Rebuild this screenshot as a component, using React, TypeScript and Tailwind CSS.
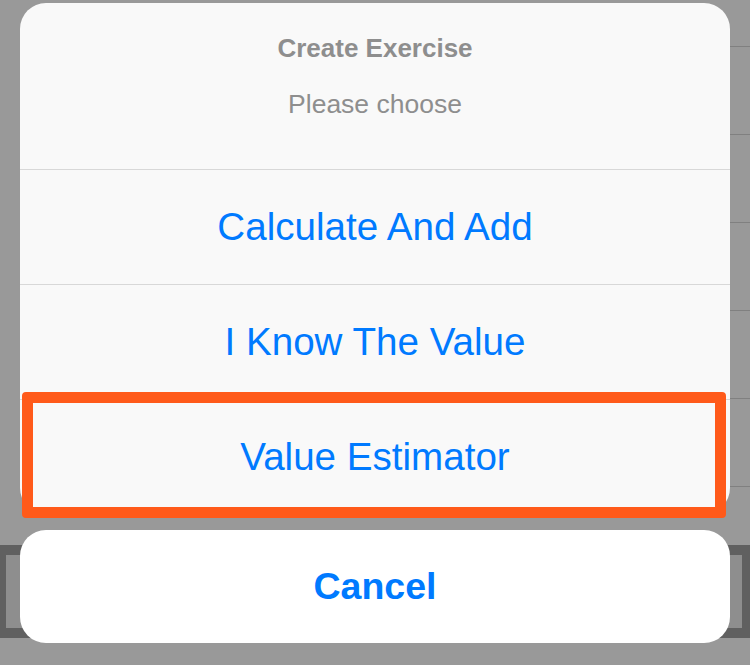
import React from "react";

const rows = ["Calculate And Add", "I Know The Value", "Value Estimator"];

export default function App() {
  return (
    <div
      className="relative w-[750px] h-[665px] overflow-hidden bg-[#999999]"
      style={{ fontFamily: '"Liberation Sans", Arial, sans-serif' }}
    >
      {/* background page */}
      <div className="flex flex-col">
        <div className="h-[47px] ml-[30px] border-b border-[#808080]" />
        {[0, 1, 2, 3, 4].map((i) => (
          <div key={i} className="h-[88px] ml-[30px] border-b border-[#808080]" />
        ))}
        <div className="mt-[58px] h-[93px] bg-[#8e8e8e] border-l-[6px] border-r-[8px] border-y-[10px] border-[#606060]" />
      </div>

      {/* action sheet */}
      <div className="absolute top-[3px] left-[20px] w-[710px] flex flex-col">
        <div className="rounded-[26px] bg-[#f9f9f9] overflow-hidden flex flex-col">
          <div className="h-[166px] flex flex-col items-center pt-[30px]">
            <div className="text-[26px] leading-[30px] font-bold text-[#8e8e8e]">
              Create Exercise
            </div>
            <div className="mt-[26px] text-[26.5px] leading-[30px] text-[#8e8e8e]">
              Please choose
            </div>
          </div>
          {rows.map((r) => (
            <div
              key={r}
              className="h-[115px] border-t border-[#d8d8d8] flex items-center justify-center text-[38.6px] text-[#007aff]"
            >
              {r}
            </div>
          ))}
        </div>
        <div className="mt-[16px] h-[113px] rounded-[26px] bg-white flex items-center justify-center text-[37.5px] font-bold text-[#007aff]">
          Cancel
        </div>
      </div>

      {/* highlight annotation */}
      <div className="absolute left-[22px] top-[392px] w-[704px] h-[126px] border-[11px] border-[#ff5a1a] rounded-[4px]" />
    </div>
  );
}
